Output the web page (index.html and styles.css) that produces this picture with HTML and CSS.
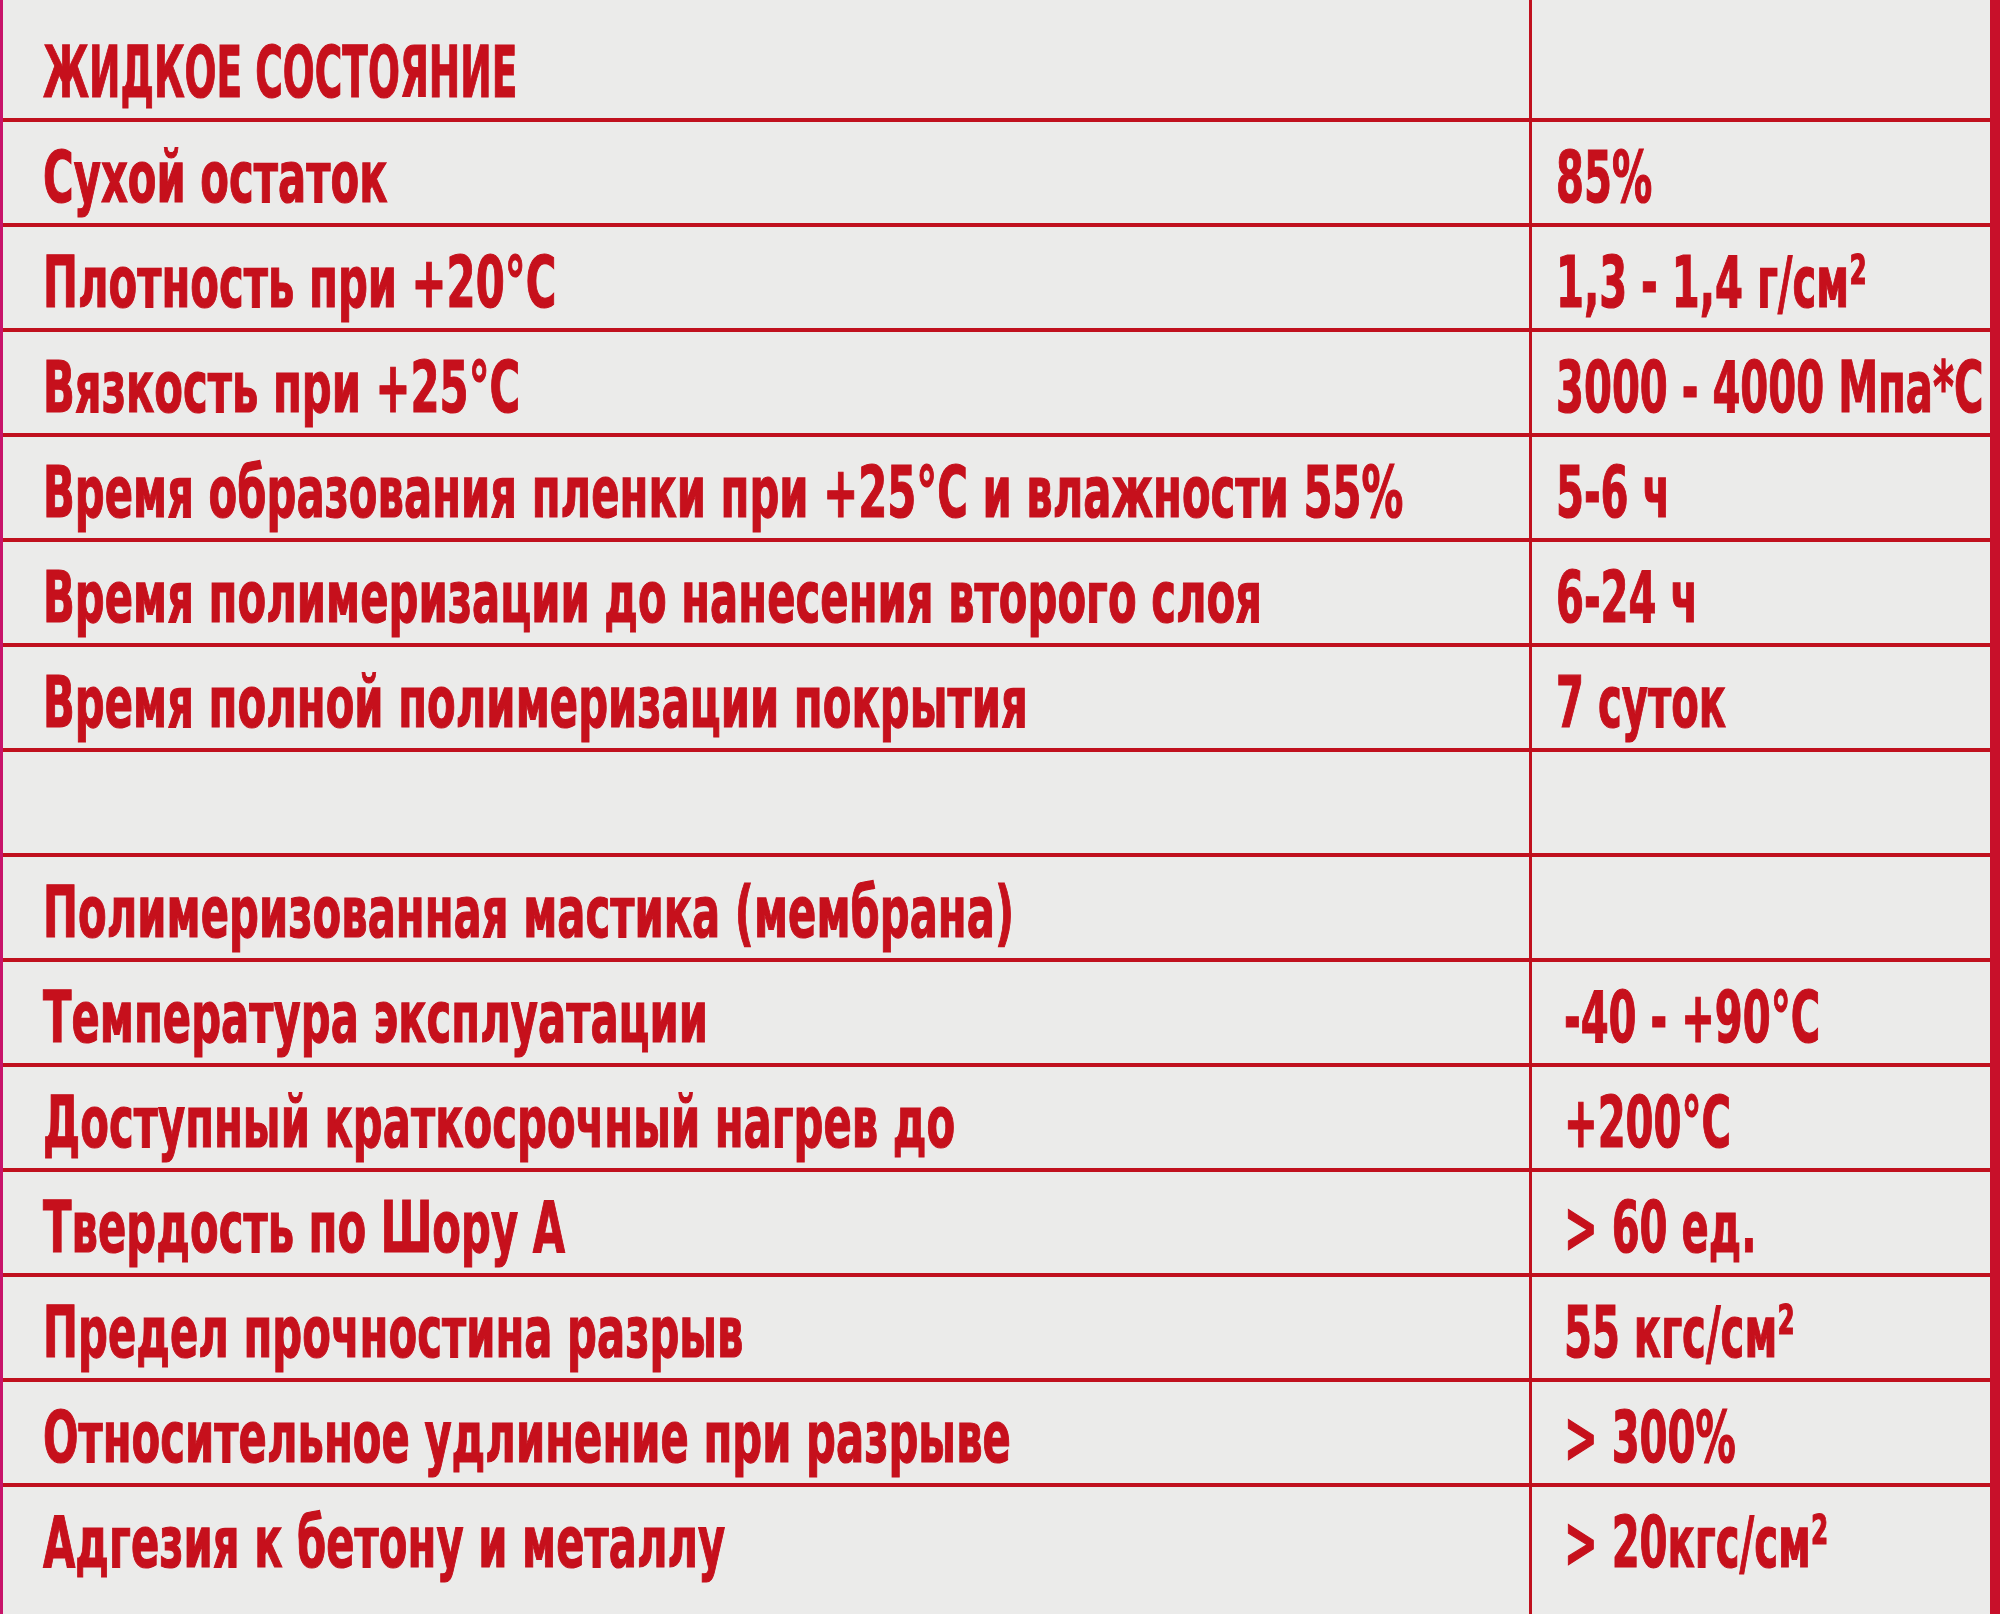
FILE: index.html
```html
<!DOCTYPE html>
<html lang="ru">
<head>
<meta charset="utf-8">
<title>Технические характеристики</title>
<link rel="stylesheet" href="styles.css">
</head>
<body>
<div class="sheet">
  <div class="cell name"><span class="t caps">ЖИДКОЕ СОСТОЯНИЕ</span></div>
  <div class="cell val"></div>

  <div class="cell name"><span class="t">Сухой остаток</span></div>
  <div class="cell val"><span class="t">85%</span></div>

  <div class="cell name"><span class="t">Плотность при +20°C</span></div>
  <div class="cell val"><span class="t">1,3 - 1,4 г/см²</span></div>

  <div class="cell name"><span class="t">Вязкость при +25°C</span></div>
  <div class="cell val"><span class="t">3000 - 4000 Мпа*С</span></div>

  <div class="cell name"><span class="t">Время образования пленки при +25°C и влажности 55%</span></div>
  <div class="cell val"><span class="t">5-6 ч</span></div>

  <div class="cell name"><span class="t">Время полимеризации до нанесения второго слоя</span></div>
  <div class="cell val"><span class="t">6-24 ч</span></div>

  <div class="cell name"><span class="t">Время полной полимеризации покрытия</span></div>
  <div class="cell val"><span class="t">7 суток</span></div>

  <div class="cell name"></div>
  <div class="cell val"></div>

  <div class="cell name"><span class="t">Полимеризованная мастика (мембрана)</span></div>
  <div class="cell val"></div>

  <div class="cell name"><span class="t">Температура эксплуатации</span></div>
  <div class="cell val lower"><span class="t">-40 - +90°C</span></div>

  <div class="cell name"><span class="t">Доступный краткосрочный нагрев до</span></div>
  <div class="cell val lower"><span class="t">+200°C</span></div>

  <div class="cell name"><span class="t">Твердость по Шору А</span></div>
  <div class="cell val lower"><span class="t">&gt; 60 ед.</span></div>

  <div class="cell name"><span class="t">Предел прочностина разрыв</span></div>
  <div class="cell val lower"><span class="t">55 кгс/см²</span></div>

  <div class="cell name"><span class="t">Относительное удлинение при разрыве</span></div>
  <div class="cell val lower"><span class="t">&gt; 300%</span></div>

  <div class="cell name last"><span class="t">Адгезия к бетону и металлу</span></div>
  <div class="cell val lower last"><span class="t">&gt; 20кгс/см²</span></div>
</div>
</body>
</html>
```

FILE: styles.css
```css
html, body {
  margin: 0;
  padding: 0;
  background: #ebebea;
}

.sheet {
  width: 2000px;
  height: 1614px;
  box-sizing: border-box;
  display: grid;
  grid-template-columns: 1529px 1fr;
  grid-template-rows: 122px repeat(13, 105px) 1fr;
  border-left: 3px solid #c8146a;
  border-right: 10px solid #c8102a;
  background: #ebebea;
  overflow: hidden;
  font-family: "Liberation Sans Narrow", "DejaVu Sans Condensed", "DejaVu Sans", sans-serif;
  font-weight: bold;
  font-stretch: condensed;
  color: #c6101c;
}

.cell {
  box-sizing: border-box;
  border-bottom: 4px solid #c0101e;
  display: flex;
  align-items: flex-end;
  padding: 0 0 10px 0;
  overflow: visible;
  white-space: nowrap;
}

.cell.last {
  border-bottom: none;
  padding-bottom: 36px;
}

.name {
  border-right: 3px solid #c0101e;
  padding-left: 40px;
}

.val {
  padding-left: 24px;
}

.val.lower {
  padding-left: 32px;
}

.t {
  display: inline-block;
  font-size: 72px;
  line-height: 1;
  -webkit-text-stroke: 1.2px #c6101c;
  transform: scaleX(0.645);
  transform-origin: left bottom;
}

.val .t {
  transform: scaleX(0.62);
}

.name .caps {
  transform: scaleX(0.58);
}
```
